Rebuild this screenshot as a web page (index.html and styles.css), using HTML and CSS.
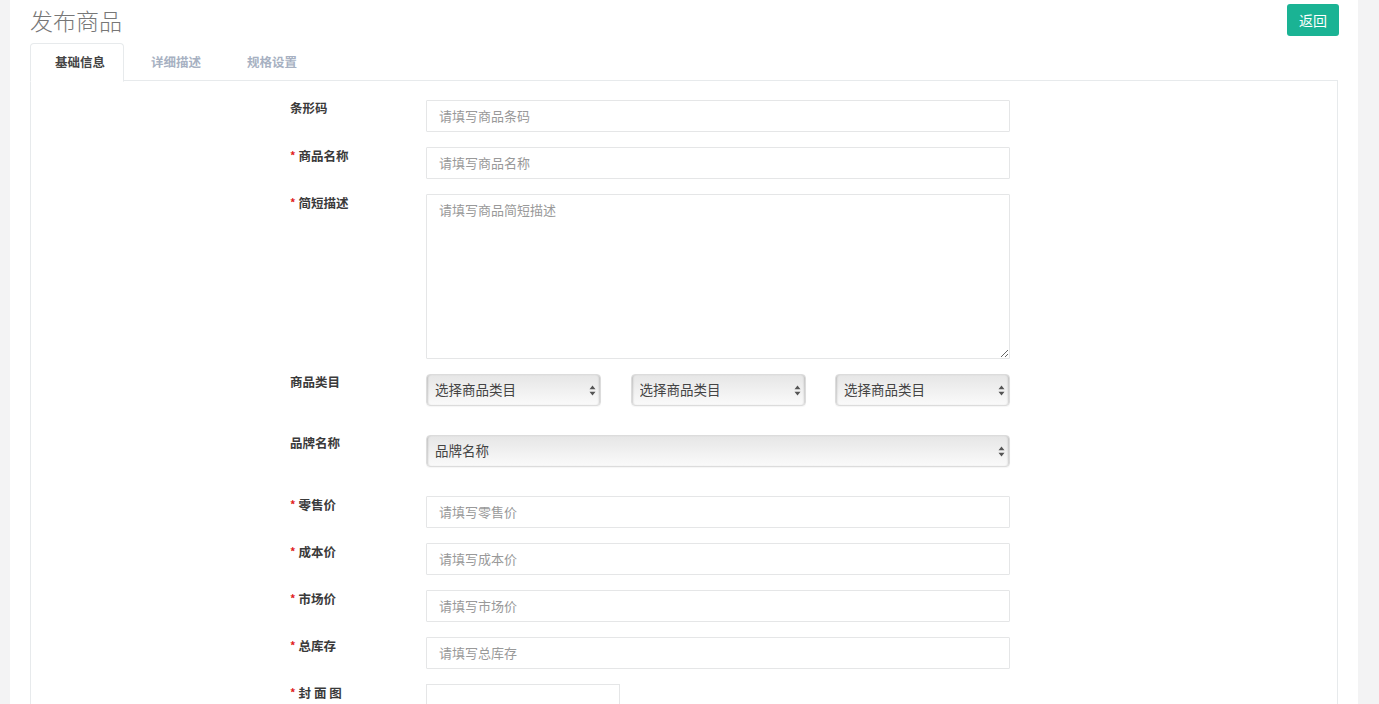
FILE: index.html
```html
<!DOCTYPE html>
<html lang="zh-CN">
<head>
<meta charset="utf-8">
<title>发布商品</title>
<link rel="stylesheet" href="styles.css">
</head>
<body>
<div class="page">
  <div class="header">
    <h2 class="title">发布商品</h2>
    <button class="btn-back" type="button">返回</button>
  </div>
  <ul class="tabs">
    <li class="tab active"><a>基础信息</a></li>
    <li class="tab"><a>详细描述</a></li>
    <li class="tab"><a>规格设置</a></li>
  </ul>
  <div class="panel">
    <form class="form">
      <div class="row">
        <label class="label">条形码</label>
        <input class="input" type="text" placeholder="请填写商品条码">
      </div>
      <div class="row">
        <label class="label"><span class="req">*</span>商品名称</label>
        <input class="input" type="text" placeholder="请填写商品名称">
      </div>
      <div class="row">
        <label class="label"><span class="req">*</span>简短描述</label>
        <textarea class="textarea" placeholder="请填写商品简短描述"></textarea>
      </div>
      <div class="row row-select">
        <label class="label">商品类目</label>
        <div class="cats">
          <div class="select-wrap">
            <select class="select"><option>选择商品类目</option></select>
            <svg class="arrows" width="7" height="11" viewBox="0 0 7 11"><path d="M0.5 4.2 L3.5 0.5 L6.5 4.2 Z M0.5 6.8 L3.5 10.5 L6.5 6.8 Z" fill="#555"/></svg>
          </div>
          <div class="select-wrap">
            <select class="select"><option>选择商品类目</option></select>
            <svg class="arrows" width="7" height="11" viewBox="0 0 7 11"><path d="M0.5 4.2 L3.5 0.5 L6.5 4.2 Z M0.5 6.8 L3.5 10.5 L6.5 6.8 Z" fill="#555"/></svg>
          </div>
          <div class="select-wrap">
            <select class="select"><option>选择商品类目</option></select>
            <svg class="arrows" width="7" height="11" viewBox="0 0 7 11"><path d="M0.5 4.2 L3.5 0.5 L6.5 4.2 Z M0.5 6.8 L3.5 10.5 L6.5 6.8 Z" fill="#555"/></svg>
          </div>
        </div>
      </div>
      <div class="row row-select">
        <label class="label">品牌名称</label>
        <div class="select-wrap">
          <select class="select"><option>品牌名称</option></select>
          <svg class="arrows" width="7" height="11" viewBox="0 0 7 11"><path d="M0.5 4.2 L3.5 0.5 L6.5 4.2 Z M0.5 6.8 L3.5 10.5 L6.5 6.8 Z" fill="#555"/></svg>
        </div>
      </div>
      <div class="row">
        <label class="label"><span class="req">*</span>零售价</label>
        <input class="input" type="text" placeholder="请填写零售价">
      </div>
      <div class="row">
        <label class="label"><span class="req">*</span>成本价</label>
        <input class="input" type="text" placeholder="请填写成本价">
      </div>
      <div class="row">
        <label class="label"><span class="req">*</span>市场价</label>
        <input class="input" type="text" placeholder="请填写市场价">
      </div>
      <div class="row">
        <label class="label"><span class="req">*</span>总库存</label>
        <input class="input" type="text" placeholder="请填写总库存">
      </div>
      <div class="row">
        <label class="label"><span class="req">*</span>封 面 图</label>
        <div class="cover"></div>
      </div>
    </form>
  </div>
</div>
</body>
</html>
```

FILE: styles.css
```css
* { box-sizing: border-box; }
html, body { margin: 0; padding: 0; }
body {
  background: #f3f3f4;
  font-family: "Noto Sans CJK SC", "Noto Sans", sans-serif;
  color: #333;
  height: 704px;
  overflow: hidden;
}
.page {
  margin-left: 10px;
  width: 1348px;
  min-height: 704px;
  background: #fff;
  padding: 0 20px;
}
.header {
  display: flex;
  justify-content: space-between;
  align-items: flex-start;
  height: 43px;
}
.title {
  margin: 5px 0 0 0;
  font-size: 23px;
  line-height: 30px;
  font-weight: 300;
  color: #777;
}
.btn-back {
  margin-top: 4px;
  margin-right: -1px;
  width: 52px;
  height: 32px;
  border: none;
  border-radius: 3px;
  background: #1ab394;
  color: #fff;
  font-family: inherit;
  font-size: 14px;
  padding: 0;
}
.tabs {
  list-style: none;
  margin: 0;
  padding: 0;
  display: flex;
  border-bottom: 1px solid #e7eaec;
  height: 38px;
}
.tab { margin-right: 2px; }
.tab a {
  display: block;
  width: 94px;
  height: 38px;
  padding: 0 0 0 24px;
  line-height: 36px;
  font-size: 12.5px;
  font-weight: bold;
  white-space: nowrap;
  color: #a7b1c2;
  border: 1px solid transparent;
  border-radius: 4px 4px 0 0;
}
.tab.active a {
  color: #444;
  background: #fff;
  border-color: #e7eaec;
  border-bottom-color: #fff;
  height: 39px;
}
.panel {
  border: 1px solid #e7eaec;
  border-top: none;
  min-height: 640px;
}
.form {
  padding: 19px 0 0 259px;
}
.row {
  display: grid;
  grid-template-columns: 136px 584px;
  margin-bottom: 15px;
}
.row-select { margin-bottom: 29px; }
.label {
  font-size: 12.5px;
  font-weight: bold;
  line-height: 16px;
  color: #3a3a3a;
  white-space: pre;
}
.req {
  color: #e02020;
  font-size: 11px;
  margin-right: 3px;
  vertical-align: 1px;
}
.input, .textarea {
  width: 584px;
  height: 32px;
  border: 1px solid #e5e6e7;
  border-radius: 1px;
  padding: 0 12px 2px;
  font-family: inherit;
  font-size: 13px;
  color: #555;
  background: #fff;
  outline: none;
}
.textarea {
  height: 165px;
  padding: 5px 12px;
  line-height: 20px;
}
.input::placeholder, .textarea::placeholder { color: #999; }
.cats {
  display: flex;
  justify-content: space-between;
  width: 584px;
}
.cats .select-wrap { width: 175px; }
.select-wrap {
  position: relative;
  height: 32px;
}
.select {
  -webkit-appearance: none;
  appearance: none;
  width: 100%;
  height: 32px;
  border: 1px solid #dcdcdc;
  border-radius: 4px;
  padding: 0 8px 2px;
  font-family: inherit;
  font-size: 13.5px;
  color: #444;
  background: linear-gradient(#e6e6e6, #fafafa);
  box-shadow: inset 2px 0 2px -1px rgba(0,0,0,0.18), inset -2px 0 2px -1px rgba(0,0,0,0.18), 0 1px 1px rgba(0,0,0,0.04);
  outline: none;
}
.arrows {
  position: absolute;
  right: 5px;
  top: 11px;
  pointer-events: none;
}
.cover {
  width: 194px;
  height: 150px;
  border: 1px solid #e5e6e7;
}
```
